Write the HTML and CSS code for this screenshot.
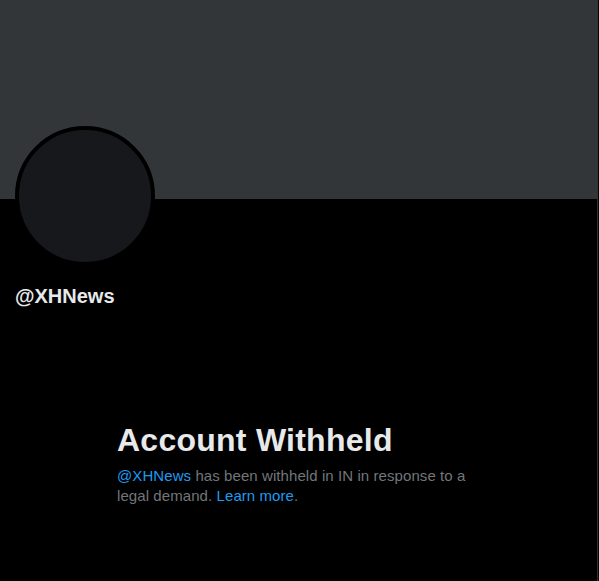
FILE: index.html
```html
<!DOCTYPE html>
<html>
<head>
<meta charset="utf-8">
<link rel="stylesheet" href="styles.css">
</head>
<body>
<main class="column">
  <div class="banner"></div>
  <div class="profile">
    <div class="avatar"></div>
    <div class="handle">@XHNews</div>
  </div>
  <section class="withheld">
    <h1 class="title">Account Withheld</h1>
    <p class="message"><a class="link" href="#">@XHNews</a> has been withheld in IN in response to a legal demand. <a class="link" href="#">Learn more</a>.</p>
  </section>
</main>
</body>
</html>
```
FILE: styles.css
```css
html, body {
  margin: 0;
  padding: 0;
  background: #000;
  height: 100%;
}
body {
  font-family: "Liberation Sans", Arial, sans-serif;
  color: #e7e9ea;
}
.column {
  width: 597px;
  min-height: 581px;
  border-right: 1px solid #2f3336;
  box-sizing: content-box;
}
.banner {
  height: 199px;
  background: #333639;
}
.profile {
  padding: 0 15px;
}
.avatar {
  width: 132px;
  height: 132px;
  margin-top: -73px;
  border: 4px solid #000;
  border-radius: 50%;
  background: #16181c;
}
.handle {
  margin-top: 18px;
  font-size: 20px;
  line-height: 24px;
  font-weight: 700;
  color: #e7e9ea;
}
.withheld {
  margin: 114px 0 0 117px;
  width: 364px;
}
.title {
  margin: 0;
  font-size: 32px;
  line-height: 36px;
  font-weight: 800;
  letter-spacing: 0.25px;
  color: #e7e9ea;
}
.message {
  margin: 8px 0 0;
  font-size: 15px;
  line-height: 20px;
  letter-spacing: 0.08px;
  color: #71767b;
}
.link {
  color: #1d9bf0;
  text-decoration: none;
}
```
